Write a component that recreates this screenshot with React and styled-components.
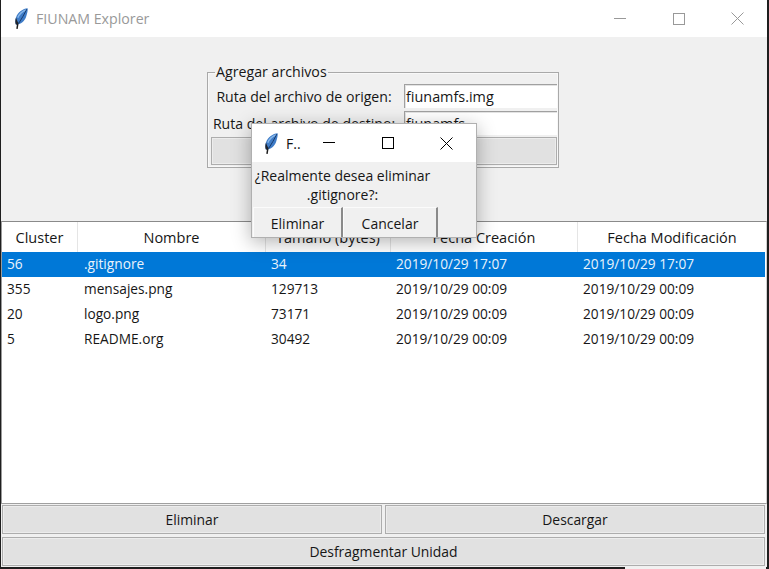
import React from "react";
import styled, { createGlobalStyle } from "styled-components";

const Global = createGlobalStyle`
  html, body { margin: 0; padding: 0; background: #1e1e1e; }
  body { width: 769px; height: 569px; overflow: hidden; font-family: "Open Sans", "Noto Sans", sans-serif; font-size: 14px; color: #161616; }
  * { box-sizing: border-box; }
`;

const Desktop = styled.div`
  position: relative;
  width: 769px;
  height: 569px;
  padding: 0 2px 2px 1px;
`;

const BackgroundPeek = styled.div`
  position: absolute;
  left: 625px;
  bottom: 0;
  width: 141px;
  height: 2px;
  background: #f1f1f1;
`;

const Window = styled.div`
  width: 766px;
  height: 567px;
  background: #f0f0f0;
  display: flex;
  flex-direction: column;
`;

const TitleBar = styled.div`
  height: 37px;
  flex: none;
  background: #fff;
  display: flex;
  align-items: center;
  color: #999;
  font-size: 14.2px;
  padding-left: 14px;
`;

const TitleText = styled.span`
  margin-left: 8px;
  margin-top: -1px;
  flex: 1;
  white-space: nowrap;
  overflow: hidden;
`;

const WinButton = styled.div`
  width: 59px;
  height: 37px;
  flex: none;
  display: flex;
  align-items: center;
  justify-content: center;
`;

const Top = styled.div`
  height: 184px;
  flex: none;
  padding: 28px 0 0 206px;
`;

const Group = styled.fieldset`
  width: 352px;
  height: 103px;
  margin: 0;
  padding: 5px 1px 0 3px;
  border: 1px solid #a9a9a9;
  box-shadow: inset 0 0 0 1px #f8f8f8;
  display: flex;
  flex-direction: column;
`;

const Legend = styled.legend`
  padding: 0 1px;
  margin-left: 4px;
  font-size: 14.2px;
  line-height: 14px;
`;

const FormRow = styled.div`
  display: flex;
  height: 24px;
  flex: none;
  align-items: center;
  margin-bottom: ${(p) => p.$mb}px;
`;

const FormLabel = styled.span`
  width: 186px;
  margin-right: 7px;
  flex: none;
  text-align: center;
  font-size: 14.1px;
  white-space: nowrap;
`;

const Input = styled.div`
  width: 153px;
  height: 24px;
  flex: none;
  background: #fff;
  border-top: 1px solid #a0a0a0;
  border-left: 1px solid #a0a0a0;
  box-shadow: inset 1px 1px 0 #e3e3e3;
  padding: 1px 0 0 1px;
  font-size: 14.4px;
  line-height: 22px;
`;

const AddButton = styled.div`
  height: 28px;
  flex: none;
  background: #e1e1e1;
  border: 1px solid #adadad;
  box-shadow: inset 0 0 0 1px #ececec;
`;

const Table = styled.div`
  flex: 1;
  background: #fff;
  border-top: 1px solid #8a8a8a;
  border-left: 1px solid #9a9a9a;
  border-right: 1px solid #d0d0d0;
  border-bottom: 1px solid #a0a0a0;
`;

const HeaderRow = styled.div`
  display: grid;
  grid-template-columns: 76px 188px 125px 187px 1fr;
  height: 30px;
`;

const HeaderCell = styled.div`
  display: flex;
  align-items: center;
  justify-content: center;
  border-right: 1px solid #e5e5e5;
  font-size: 14.5px;
  white-space: nowrap;
  &:last-child { border-right: none; }
`;

const Row = styled.div`
  display: grid;
  grid-template-columns: 76px 187px 125px 187px 1fr;
  height: 25px;
  align-items: center;
  margin-right: 1px;
  background: ${(p) => (p.$selected ? "#0078d7" : "#fff")};
  color: ${(p) => (p.$selected ? "#eaf3fb" : "#161616")};
`;

const Cell = styled.div`
  padding: 0 0 2px ${(p) => (p.$first ? 5 : 6)}px;
  font-size: 13.7px;
  white-space: nowrap;
`;

const Actions = styled.div`
  flex: none;
  padding: 1px 2px 1px 1px;
  display: flex;
  flex-direction: column;
  gap: 3px;
`;

const ActionRow = styled.div`
  display: flex;
  gap: 3px;
`;

const ActionButton = styled.div`
  flex: 1;
  height: 29px;
  background: #e1e1e1;
  border: 1px solid #adadad;
  box-shadow: inset 0 0 0 1px #ececec;
  display: flex;
  align-items: center;
  justify-content: center;
  font-size: 13.9px;
`;

const Dialog = styled.div`
  position: absolute;
  left: 251px;
  top: 123px;
  width: 226px;
  height: 115px;
  background: #f0f0f0;
  border: 1px solid #b0b0b0;
  box-shadow: 0 4px 18px rgba(0, 0, 0, 0.3);
  display: flex;
  flex-direction: column;
`;

const DialogTitle = styled.div`
  height: 38px;
  flex: none;
  background: #fff;
  display: flex;
  align-items: center;
  padding-left: 13px;
  font-size: 14px;
  color: #111;
`;

const DialogTitleText = styled.span`
  margin-left: 8px;
  width: 13px;
  flex: none;
  white-space: nowrap;
`;

const DialogButton = styled.div`
  width: 59px;
  height: 38px;
  flex: none;
  display: flex;
  align-items: center;
  justify-content: center;
`;

const Message = styled.div`
  height: 45px;
  flex: none;
  width: 181px;
  text-align: center;
  padding-top: 4px;
  font-size: 14px;
  line-height: 19px;
  white-space: nowrap;
`;

const DialogActions = styled.div`
  display: flex;
  flex: 1;
  padding-left: 1px;
`;

const DialogBtn = styled.div`
  width: ${(p) => p.$w}px;
  height: 30px;
  padding-top: 1px;
  border-top: 1px solid #fbfbfb;
  border-left: 1px solid #fbfbfb;
  border-right: 2px solid #8a8a8a;
  display: flex;
  align-items: center;
  justify-content: center;
  font-size: 14px;
`;

const FeatherSvg = styled.svg`
  flex: none;
`;

const Feather = () => (
  <FeatherSvg width="13" height="21" viewBox="0 0 13 21">
    <path d="M12.6 0.2C8 0.6 2.8 4 1 9.4.1 12 .1 14.8 1 16.8 5.8 16.6 10 12.8 11.3 8.2 12.2 5.2 13 2.4 12.6.2z" fill="#3f7cc7" />
    <path d="M10.8 2C7.2 3.4 4.2 6.2 2.8 9.8" stroke="#86b6ea" strokeWidth="1.4" fill="none" />
    <path d="M11.8 1.2C9.4 6 6.8 10.6 3.8 15.2" stroke="#173a6c" strokeWidth="1" fill="none" />
    <path d="M1 9.4C.1 12 .1 14.8 1 16.8l2.8-1.5C2.4 13.6 1.6 11.4 1 9.4z" fill="#20242c" />
    <path d="M2.8 15.5 2 20.8" stroke="#1b1b1b" strokeWidth="1.5" fill="none" />
  </FeatherSvg>
);

const MinIcon = ({ c }) => (
  <svg width="12" height="2" viewBox="0 0 12 2"><path d="M0 .5h12" stroke={c} fill="none" /></svg>
);
const MaxIcon = ({ c }) => (
  <svg width="12" height="12" viewBox="0 0 12 12"><rect x=".5" y=".5" width="11" height="11" stroke={c} fill="none" /></svg>
);
const CloseIcon = ({ c }) => (
  <svg width="13" height="13" viewBox="0 0 13 13"><path d="M.5.5l12 12M12.5.5l-12 12" stroke={c} fill="none" /></svg>
);

const rows = [
  ["56", ".gitignore", "34", "2019/10/29 17:07", "2019/10/29 17:07"],
  ["355", "mensajes.png", "129713", "2019/10/29 00:09", "2019/10/29 00:09"],
  ["20", "logo.png", "73171", "2019/10/29 00:09", "2019/10/29 00:09"],
  ["5", "README.org", "30492", "2019/10/29 00:09", "2019/10/29 00:09"],
];

const headers = ["Cluster", "Nombre", "Tamaño (bytes)", "Fecha Creación", "Fecha Modificación"];

export default function App() {
  return (
    <Desktop>
      <Global />
      <Window>
        <TitleBar>
          <Feather />
          <TitleText>FIUNAM Explorer</TitleText>
          <WinButton><MinIcon c="#999" /></WinButton>
          <WinButton><MaxIcon c="#999" /></WinButton>
          <WinButton><CloseIcon c="#999" /></WinButton>
        </TitleBar>
        <Top>
          <Group>
            <Legend>Agregar archivos</Legend>
            <FormRow $mb={3}>
              <FormLabel>Ruta del archivo de origen:</FormLabel>
              <Input>fiunamfs.img</Input>
            </FormRow>
            <FormRow $mb={2}>
              <FormLabel>Ruta del archivo de destino:</FormLabel>
              <Input>fiunamfs</Input>
            </FormRow>
            <AddButton />
          </Group>
        </Top>
        <Table>
          <HeaderRow>
            {headers.map((h) => <HeaderCell key={h}>{h}</HeaderCell>)}
          </HeaderRow>
          {rows.map((r, i) => (
            <Row key={r[0]} $selected={i === 0}>
              {r.map((c, j) => <Cell key={j} $first={j === 0}>{c}</Cell>)}
            </Row>
          ))}
        </Table>
        <Actions>
          <ActionRow>
            <ActionButton>Eliminar</ActionButton>
            <ActionButton>Descargar</ActionButton>
          </ActionRow>
          <ActionRow>
            <ActionButton>Desfragmentar Unidad</ActionButton>
          </ActionRow>
        </Actions>
      </Window>
      <BackgroundPeek />
      <Dialog>
        <DialogTitle>
          <Feather />
          <DialogTitleText>F..</DialogTitleText>
          <DialogButton><MinIcon c="#000" /></DialogButton>
          <DialogButton><MaxIcon c="#000" /></DialogButton>
          <DialogButton><CloseIcon c="#000" /></DialogButton>
        </DialogTitle>
        <Message>¿Realmente desea eliminar<br />.gitignore?:</Message>
        <DialogActions>
          <DialogBtn $w={90}>Eliminar</DialogBtn>
          <DialogBtn $w={95}>Cancelar</DialogBtn>
        </DialogActions>
      </Dialog>
    </Desktop>
  );
}
